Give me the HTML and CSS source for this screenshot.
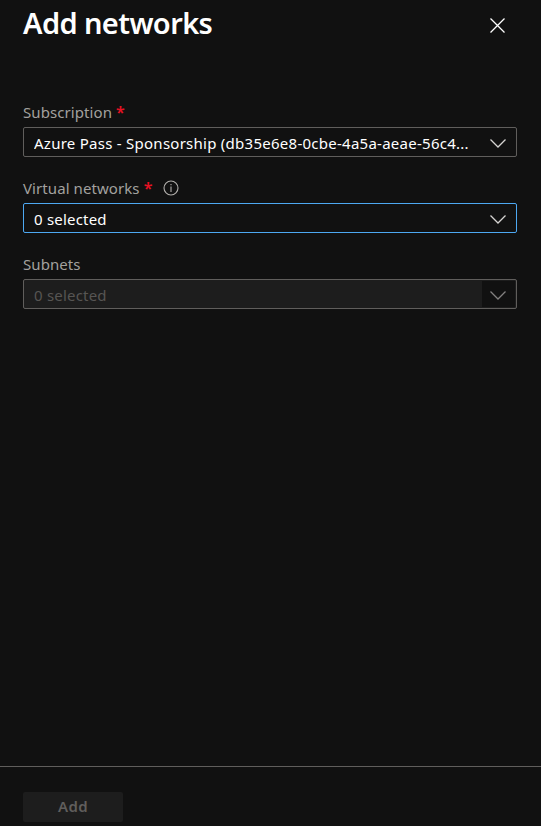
FILE: index.html
```
<!DOCTYPE html>
<html lang="en">
<head>
<meta charset="utf-8">
<title>Add networks</title>
<link rel="stylesheet" href="styles.css">
</head>
<body>
<main class="panel">
  <header class="header">
    <h1 class="title">Add networks</h1>
    <svg class="close" viewBox="0 0 15 15"><path d="M.5.5 14.5 14.5M14.5.5.5 14.5"/></svg>
  </header>
  <section class="form">
    <div class="field">
      <div class="label"><span>Subscription</span><span class="required">*</span></div>
      <div class="select"><span class="value long">Azure Pass - Sponsorship (db35e6e8-0cbe-4a5a-aeae-56c4...</span><span class="arrow"><svg viewBox="0 0 16 9"><path d="M.5.5 8 8 15.5.5"/></svg></span></div>
    </div>
    <div class="field">
      <div class="label"><span>Virtual networks</span><span class="required">*</span><svg class="info" viewBox="0 0 16 16"><circle cx="8" cy="8" r="7"/><path d="M8 6.5V12M8 4v1.3"/></svg></div>
      <div class="select focused"><span class="value">0 selected</span><span class="arrow"><svg viewBox="0 0 16 9"><path d="M.5.5 8 8 15.5.5"/></svg></span></div>
    </div>
    <div class="field">
      <div class="label"><span>Subnets</span></div>
      <div class="select disabled"><span class="value">0 selected</span><span class="arrow"><svg viewBox="0 0 16 9"><path d="M.5.5 8 8 15.5.5"/></svg></span></div>
    </div>
  </section>
  <footer class="footer"><button class="add" disabled>Add</button></footer>
</main>
</body>
</html>
```
FILE: styles.css
```
* { box-sizing: border-box; }
body { margin: 0; background: #111; color: #fff; font-family: "Noto Sans", "Open Sans", sans-serif; font-size: 15px; overflow: hidden; }
.panel { height: 826px; display: flex; flex-direction: column; }
.header { display: flex; justify-content: space-between; height: 102px; padding: 0 36px 0 23px; }
.title { margin: 0; font-size: 29px; line-height: 46px; font-weight: 600; letter-spacing: -0.6px; white-space: nowrap; }
.close { width: 15px; height: 15px; margin-top: 18px; }
svg { fill: none; stroke: #fff; stroke-width: 1.3; }
.form { flex: 1; padding: 0 24px 0 23px; }
.field { height: 76px; }
.label { display: flex; align-items: center; height: 20px; margin-bottom: 5px; color: #a3a19f; letter-spacing: 0.08px; white-space: nowrap; }
.required { margin-left: 4px; color: #e81123; font-size: 16px; font-weight: 600; }
.info { width: 16px; height: 16px; margin: 0 0 0 11px; stroke: #b3b0ad; stroke-width: 1.1; }
.select { display: flex; height: 30px; border: 1px solid #605e5c; border-radius: 2px; padding: 1px 1px 1px 10px; }
.value { flex: 1; line-height: 28px; letter-spacing: 0.2px; white-space: nowrap; overflow: hidden; }
.long { letter-spacing: 0.26px; }
.arrow { width: 33px; display: flex; align-items: center; justify-content: center; padding: 2px 1px 0 0; }
.arrow svg { width: 16px; height: 9px; stroke: #d6d4d2; stroke-width: 1.3; }
.focused { border-color: #4da8f2; }
.disabled { background: #1d1d1d; color: #575553; }
.disabled .arrow { background: #111; }
.disabled .arrow svg { stroke: #838180; }
.footer { height: 60px; border-top: 1px solid #605e5c; padding: 25px 23px 0; }
.add { display: block; width: 100px; height: 30px; padding: 0 0 2px; border: 0; border-radius: 2px; background: #1d1d1d; color: #605e5c; font: 600 15px/28px "Noto Sans", sans-serif; letter-spacing: 0.3px; }
```
